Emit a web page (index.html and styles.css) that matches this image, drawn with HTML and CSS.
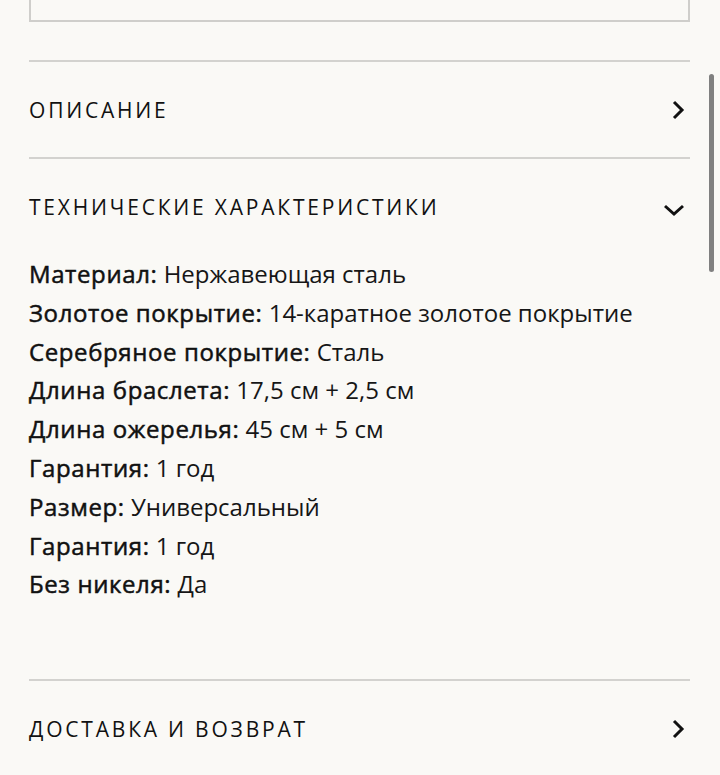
FILE: index.html
```html
<!DOCTYPE html>
<html lang="ru">
<head>
<meta charset="utf-8">
<link rel="stylesheet" href="styles.css">
</head>
<body>
<div class="page">
  <div class="topbox"></div>
  <section class="acc">
    <div class="acc-head">
      <span class="acc-title">Описание</span>
      <svg class="icon" width="16" height="22" viewBox="0 0 16 22"><path d="M4 3 L12 11 L4 19" fill="none" stroke="#111" stroke-width="3"/></svg>
    </div>
  </section>
  <section class="acc open">
    <div class="acc-head">
      <span class="acc-title">Технические характеристики</span>
      <svg class="icon down" width="24" height="16" viewBox="0 0 24 16"><path d="M3 4 L12 12 L21 4" fill="none" stroke="#111" stroke-width="3"/></svg>
    </div>
    <ul class="specs">
      <li><b>Материал:</b> Нержавеющая сталь</li>
      <li><b>Золотое покрытие:</b> 14-каратное золотое покрытие</li>
      <li><b>Серебряное покрытие:</b> Сталь</li>
      <li><b>Длина браслета:</b> 17,5 см + 2,5 см</li>
      <li><b>Длина ожерелья:</b> 45 см + 5 см</li>
      <li><b>Гарантия:</b> 1 год</li>
      <li><b>Размер:</b> Универсальный</li>
      <li><b>Гарантия:</b> 1 год</li>
      <li><b>Без никеля:</b> Да</li>
    </ul>
  </section>
  <section class="acc">
    <div class="acc-head">
      <span class="acc-title">Доставка и возврат</span>
      <svg class="icon" width="16" height="22" viewBox="0 0 16 22"><path d="M4 3 L12 11 L4 19" fill="none" stroke="#111" stroke-width="3"/></svg>
    </div>
  </section>
</div>
<div class="scrollbar"></div>
</body>
</html>
```

FILE: styles.css
```css
html, body {
  margin: 0;
  padding: 0;
  background: #faf9f6;
  height: 775px;
  overflow: hidden;
}
body {
  font-family: "Open Sans", "Noto Sans", sans-serif;
  color: #161616;
}
.page {
  margin: 0 30px 0 29px;
  display: flex;
  flex-direction: column;
}
.topbox {
  height: 21px;
  margin-top: -1px;
  border: 2px solid #cfcecb;
  border-top: none;
}
.acc {
  border-top: 2px solid #d3d2cf;
}
.topbox + .acc {
  margin-top: 38px;
}
.acc-head {
  height: 95px;
  display: flex;
  align-items: center;
  justify-content: space-between;
}
.acc-title {
  font-size: 21px;
  letter-spacing: 2.8px;
  text-transform: uppercase;
  font-weight: 400;
  color: #111;
}
.icon { margin-right: 4px; }
.icon.down { margin-right: 4px; margin-top: 6px; }
.specs {
  list-style: none;
  margin: 0;
  padding: 1px 0 75px;
  font-size: 24px;
  line-height: 38.8px;
}
.specs b {
  font-weight: 400;
  color: #111;
  -webkit-text-stroke: 0.5px #111;
  letter-spacing: 0.6px;
}
.scrollbar {
  position: absolute;
  left: 709px;
  top: 74px;
  width: 5px;
  height: 198px;
  border-radius: 3px;
  background: #808080;
}
```
